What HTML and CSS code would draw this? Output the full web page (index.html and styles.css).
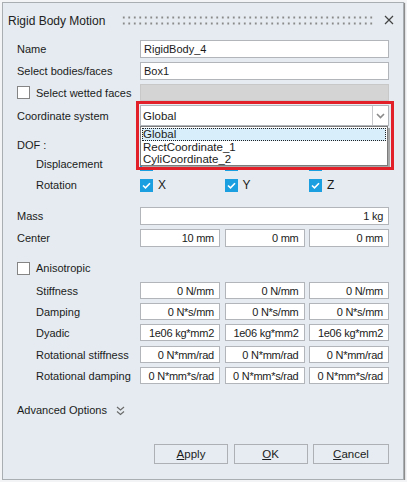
FILE: index.html
```html
<!DOCTYPE html>
<html>
<head>
<meta charset="utf-8">
<link rel="stylesheet" href="styles.css">
</head>
<body>
<div class="dialog">
  <div class="titlebar">
    <span class="title">Rigid Body Motion</span>
    <div class="grip"></div>
    <svg class="close" width="10" height="10" viewBox="0 0 10 10"><path d="M1 1L9 9M9 1L1 9" stroke="#444" stroke-width="1.2" fill="none"/></svg>
  </div>

  <div class="row mt1">
    <span class="lbl">Name</span>
    <div class="field">RigidBody_4</div>
  </div>
  <div class="row mt4">
    <span class="lbl">Select bodies/faces</span>
    <div class="field">Box1</div>
  </div>
  <div class="row mt4 h17">
    <span class="lbl chk-lbl"><span class="cb"></span>Select wetted faces</span>
    <div class="field disabled"></div>
  </div>
  <div class="row mt4 h21">
    <span class="lbl">Coordinate system</span>
    <div class="combo">
      <div class="combo-box">
        <span class="combo-text">Global</span>
        <span class="combo-btn"><svg width="9" height="6" viewBox="0 0 9 6"><path d="M1 1L4.5 4.5L8 1" stroke="#8a8a8a" stroke-width="1.6" fill="none"/></svg></span>
      </div>
      <div class="combo-list">
        <div class="item sel">Global</div>
        <div class="item">RectCoordinate_1</div>
        <div class="item">CyliCoordinate_2</div>
      </div>
      <div class="redbox"></div>
    </div>
  </div>
  <div class="row mt11 h16">
    <span class="lbl">DOF :</span>
  </div>
  <div class="row mt3 h16">
    <span class="lbl sub">Displacement</span>
    <div class="triple">
      <span class="chk"><span class="cb on"><svg width="9" height="7" viewBox="0 0 9 7"><path d="M1 3.5L3.5 5.8L8 1.2" stroke="#fff" stroke-width="1.6" fill="none"/></svg></span>X</span>
      <span class="chk"><span class="cb on"><svg width="9" height="7" viewBox="0 0 9 7"><path d="M1 3.5L3.5 5.8L8 1.2" stroke="#fff" stroke-width="1.6" fill="none"/></svg></span>Y</span>
      <span class="chk"><span class="cb on"><svg width="9" height="7" viewBox="0 0 9 7"><path d="M1 3.5L3.5 5.8L8 1.2" stroke="#fff" stroke-width="1.6" fill="none"/></svg></span>Z</span>
    </div>
  </div>
  <div class="row mt5 h16">
    <span class="lbl sub">Rotation</span>
    <div class="triple">
      <span class="chk"><span class="cb on"><svg width="9" height="7" viewBox="0 0 9 7"><path d="M1 3.5L3.5 5.8L8 1.2" stroke="#fff" stroke-width="1.6" fill="none"/></svg></span>X</span>
      <span class="chk"><span class="cb on"><svg width="9" height="7" viewBox="0 0 9 7"><path d="M1 3.5L3.5 5.8L8 1.2" stroke="#fff" stroke-width="1.6" fill="none"/></svg></span>Y</span>
      <span class="chk"><span class="cb on"><svg width="9" height="7" viewBox="0 0 9 7"><path d="M1 3.5L3.5 5.8L8 1.2" stroke="#fff" stroke-width="1.6" fill="none"/></svg></span>Z</span>
    </div>
  </div>

  <div class="row mt14">
    <span class="lbl">Mass</span>
    <div class="field num">1 kg</div>
  </div>
  <div class="row mt4">
    <span class="lbl">Center</span>
    <div class="triple">
      <div class="field num">10 mm</div>
      <div class="field num">0 mm</div>
      <div class="field num">0 mm</div>
    </div>
  </div>

  <div class="row mt13 h16">
    <span class="lbl chk-lbl"><span class="cb"></span>Anisotropic</span>
  </div>
  <div class="row mt6 h17">
    <span class="lbl sub">Stiffness</span>
    <div class="triple">
      <div class="field num">0 N/mm</div>
      <div class="field num">0 N/mm</div>
      <div class="field num">0 N/mm</div>
    </div>
  </div>
  <div class="row mt4 h17">
    <span class="lbl sub">Damping</span>
    <div class="triple">
      <div class="field num">0 N*s/mm</div>
      <div class="field num">0 N*s/mm</div>
      <div class="field num">0 N*s/mm</div>
    </div>
  </div>
  <div class="row mt4 h17">
    <span class="lbl sub">Dyadic</span>
    <div class="triple">
      <div class="field num">1e06 kg*mm2</div>
      <div class="field num">1e06 kg*mm2</div>
      <div class="field num">1e06 kg*mm2</div>
    </div>
  </div>
  <div class="row mt5 h17">
    <span class="lbl sub">Rotational stiffness</span>
    <div class="triple">
      <div class="field num">0 N*mm/rad</div>
      <div class="field num">0 N*mm/rad</div>
      <div class="field num">0 N*mm/rad</div>
    </div>
  </div>
  <div class="row mt4 h17">
    <span class="lbl sub">Rotational damping</span>
    <div class="triple">
      <div class="field num">0 N*mm*s/rad</div>
      <div class="field num">0 N*mm*s/rad</div>
      <div class="field num">0 N*mm*s/rad</div>
    </div>
  </div>

  <div class="row mt18 h16">
    <span class="adv">Advanced Options
      <svg class="chev" width="9" height="10" viewBox="0 0 9 10"><path d="M1 1L4.5 4L8 1M1 5.5L4.5 8.5L8 5.5" stroke="#6a6a6a" stroke-width="1.2" fill="none"/></svg>
    </span>
  </div>

  <div class="buttons">
    <button class="btn w74"><u>A</u>pply</button>
    <button class="btn w74"><u>O</u>K</button>
    <button class="btn w76"><u>C</u>ancel</button>
  </div>
</div>
</body>
</html>
```

FILE: styles.css
```css
html, body {
  margin: 0;
  padding: 0;
  background: #f2f4f6;
}
body {
  font-family: "Liberation Sans", Arial, sans-serif;
  font-size: 11px;
  color: #1b1b1b;
}
.dialog {
  margin: 2px 0 0 2px;
  width: 402px;
  height: 478px;
  box-sizing: border-box;
  border: 1px solid #a9aeb3;
  background: #e5ebf0;
  box-shadow: 1px 1px 1px #8c8c8c;
  padding: 0 14px 0 14px;
  display: flex;
  flex-direction: column;
}
.titlebar {
  height: 36px;
  display: flex;
  align-items: center;
  margin-left: -9px;
  margin-right: -9px;
}
.title {
  font-size: 12px;
  color: #222;
  flex: none;
}
.grip {
  margin-left: 16px;
  width: 254px;
  height: 9px;
  margin-top: -2px;
  background-image: radial-gradient(circle, #8a8a8a 0.9px, transparent 1.2px);
  background-size: 5.5px 6px;
  background-position: 0 -1.5px;
}
.close {
  margin-left: 9px;
  margin-top: -3px;
}
.row {
  display: flex;
  align-items: center;
  height: 18px;
  flex: none;
}
.h16 { height: 16px; }
.h17 { height: 17px; }
.h21 { height: 21px; }
.mt1 { margin-top: 1px; }
.mt3 { margin-top: 3px; }
.mt4 { margin-top: 4px; }
.mt5 { margin-top: 5px; }
.mt6 { margin-top: 6px; }
.mt11 { margin-top: 11px; }
.mt13 { margin-top: 13px; }
.mt14 { margin-top: 14px; }
.mt18 { margin-top: 18px; }

.lbl {
  width: 123px;
  flex: none;
  box-sizing: border-box;
  white-space: nowrap;
}
.lbl.sub { padding-left: 19px; }
.chk-lbl {
  display: flex;
  align-items: center;
  gap: 6px;
}
.field {
  flex: 1;
  min-width: 0;
  height: 100%;
  box-sizing: border-box;
  border: 1px solid #b2b5ba;
  background: #fff;
  display: flex;
  align-items: center;
  padding: 0 3px;
  white-space: nowrap;
  overflow: hidden;
}
.field.num {
  justify-content: flex-end;
  padding-right: 5px;
  letter-spacing: -0.25px;
}
.field.disabled {
  background: #d4d4d4;
  border-color: #c8c8c8;
}
.triple {
  flex: 1;
  height: 100%;
  display: grid;
  grid-template-columns: repeat(3, 1fr);
  column-gap: 4.5px;
}
.cb {
  width: 13px;
  height: 13px;
  box-sizing: border-box;
  border: 1px solid #858585;
  background: #fff;
  flex: none;
  display: flex;
  align-items: center;
  justify-content: center;
}
.cb.on {
  background: #1c9fe1;
  border-color: #1c9fe1;
}
.chk {
  display: flex;
  align-items: center;
  gap: 5px;
  font-size: 12px;
}
.combo {
  flex: 1;
  height: 100%;
  position: relative;
}
.combo-box {
  height: 100%;
  box-sizing: border-box;
  border: 1px solid #b2b5ba;
  background: #fff;
  display: flex;
  align-items: center;
  font-size: 11.5px;
}
.combo-text {
  flex: 1;
  padding-left: 2px;
}
.combo-btn {
  width: 16px;
  height: 100%;
  box-sizing: border-box;
  border-left: 1px solid #c6c8cc;
  display: flex;
  align-items: center;
  justify-content: center;
}
.combo-list {
  position: absolute;
  left: 0;
  top: 21px;
  width: 248px;
  height: 40px;
  box-sizing: border-box;
  border: 1px solid #7c7c7c;
  background: #fff;
  box-shadow: 2px 2px 0 #a7a7a7;
  z-index: 2;
  padding: 1px 0 0 0;
  font-size: 11.5px;
}
.item {
  height: 12.5px;
  line-height: 12px;
  padding-left: 2px;
  box-sizing: border-box;
}
.item.sel {
  background: #d8eefa;
  outline: 1px dotted #222;
  outline-offset: -1px;
  margin: 0 1px 0 1px;
  padding-left: 1px;
}
.redbox {
  position: absolute;
  left: -4px;
  top: -4px;
  right: -5px;
  height: 69px;
  border: 3px solid #e2202a;
  box-sizing: border-box;
  z-index: 3;
  pointer-events: none;
}
.adv {
  display: flex;
  align-items: center;
  gap: 9px;
}
.chev { margin-top: 1px; }
.buttons {
  margin-top: 26px;
  display: flex;
  justify-content: flex-end;
  gap: 5.5px;
}
.btn {
  height: 20px;
  box-sizing: border-box;
  border: 1px solid #adb0b4;
  background: #e6ecf1;
  font-family: "Liberation Sans", Arial, sans-serif;
  font-size: 11.5px;
  color: #1b1b1b;
  padding: 0;
}
.w74 { width: 74px; }
.w76 { width: 76px; }
```
